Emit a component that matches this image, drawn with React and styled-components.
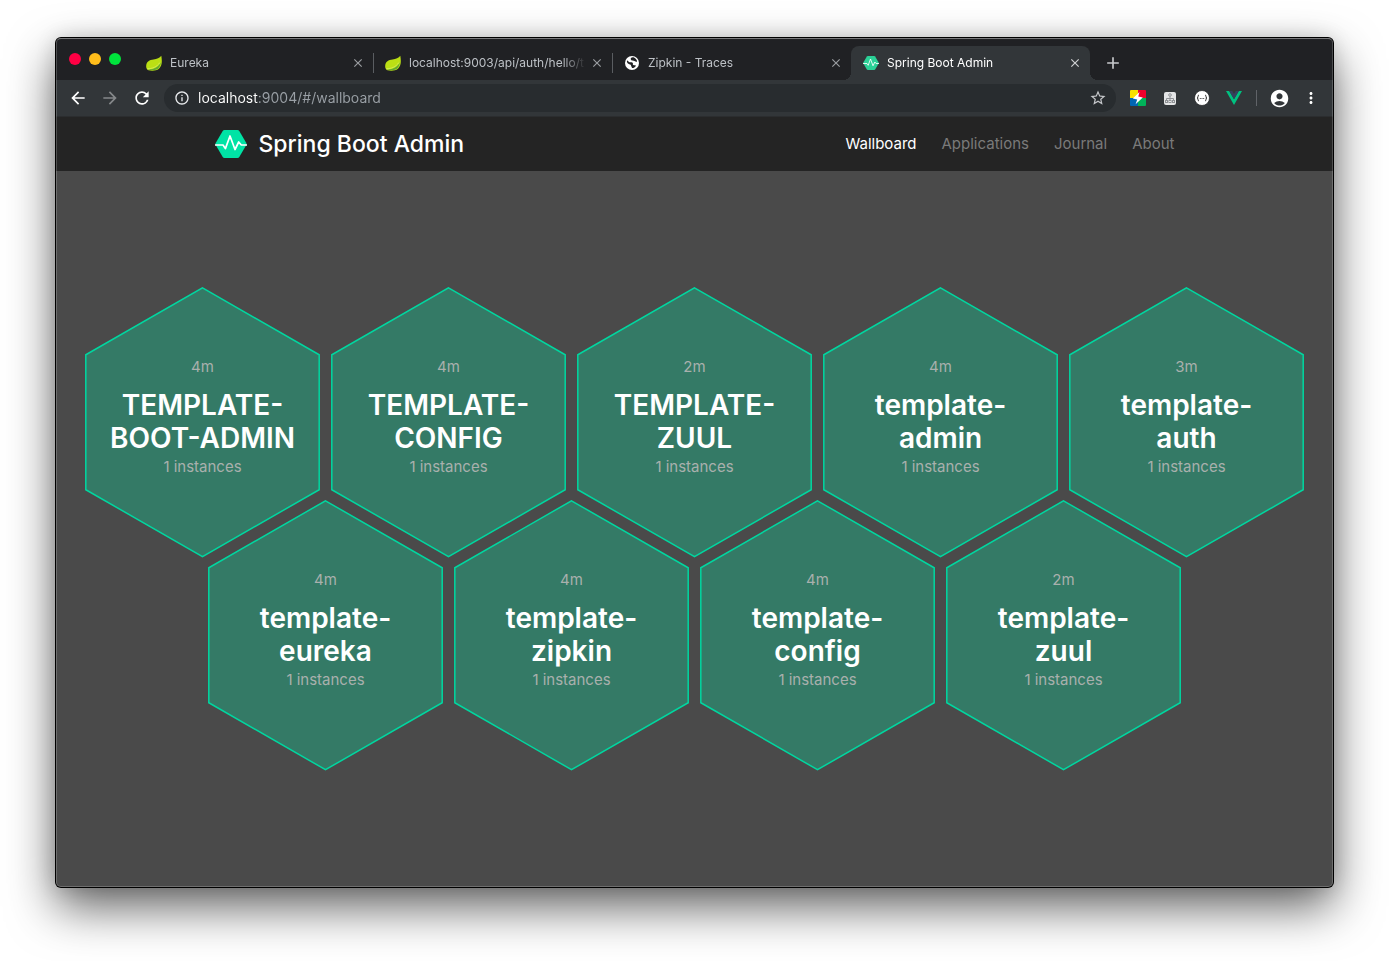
import React from "react";
import styled, { createGlobalStyle } from "styled-components";
import {
  MdAccountCircle,
  MdAdd,
  MdArrowBack,
  MdArrowForward,
  MdClose,
  MdInfoOutline,
  MdMoreVert,
  MdRefresh,
  MdStarBorder,
} from "react-icons/md";

const GlobalStyle = createGlobalStyle`
  *, *::before, *::after { box-sizing: border-box; }
  body {
    margin: 0;
    background: #fff;
    font-family: Inter, "Liberation Sans", sans-serif;
  }
  button { border: 0; padding: 0; background: none; font: inherit; color: inherit; }
  svg { display: block; flex: none; }
`;

const Desktop = styled.div`
  display: flex;
  min-height: 100vh;
  padding: 38px 56px 74px;
  overflow: hidden;
`;

const Window = styled.div`
  position: relative;
  flex: 1;
  min-width: 0;
  display: flex;
  flex-direction: column;
  border-radius: 5px;
  background: #4a4a4a;
  box-shadow: 0 0 0 1px #000, 0 20px 48px rgba(0, 0, 0, 0.62), 0 0 20px rgba(0, 0, 0, 0.15);

  &::after {
    content: "";
    position: absolute;
    inset: 0;
    border-radius: 5px;
    border: 1px solid rgba(255, 255, 255, 0.2);
    border-top-color: rgba(255, 255, 255, 0.4);
    pointer-events: none;
  }
`;

const TabStrip = styled.div`
  display: flex;
  align-items: flex-end;
  height: 42px;
  padding-left: 13px;
  border-radius: 5px 5px 0 0;
  background: #202124;
`;

const Lights = styled.div`
  display: flex;
  align-items: center;
  gap: 8px;
  align-self: stretch;
  width: 65px;
  flex: none;
`;

const Light = styled.button`
  width: 12px;
  height: 12px;
  border-radius: 50%;
  background: ${(p) => p.$color};
`;

const Tab = styled.div`
  position: relative;
  display: flex;
  align-items: center;
  flex: 0 1 239px;
  min-width: 0;
  height: 34px;
  padding: 0 8px 0 12px;
  border-radius: 8px 8px 0 0;
  background: ${(p) => (p.$active ? "#323639" : "transparent")};
  color: ${(p) => (p.$active ? "#fff" : "#bdc1c6")};

  &::before, &::after {
    content: "";
    position: absolute;
    bottom: 0;
    width: 8px;
    height: 8px;
    display: ${(p) => (p.$active ? "block" : "none")};
  }
  &::before { right: 100%; background: radial-gradient(circle at 0 0, transparent 8px, #323639 8px); }
  &::after { left: 100%; background: radial-gradient(circle at 100% 0, transparent 8px, #323639 8px); }
`;

const TabDivider = styled.span`
  position: absolute;
  right: -1px;
  top: 7px;
  width: 1px;
  height: 20px;
  background: #5a5d61;
`;

const TabTitle = styled.button`
  flex: 1;
  min-width: 0;
  margin-left: 8px;
  overflow: hidden;
  white-space: nowrap;
  text-align: left;
  font-size: 12px;
  line-height: 16px;
  mask-image: linear-gradient(90deg, #000 calc(100% - 28px), transparent calc(100% - 4px));
`;

const IconButton = styled.button`
  display: flex;
  align-items: center;
  justify-content: center;
  flex: none;
  width: ${(p) => p.$width || 32}px;
  height: 28px;
  color: ${(p) => p.$color || "#fff"};
`;

const NewTab = styled(IconButton)`
  align-self: flex-end;
  height: 34px;
  margin-left: 7px;
`;

const Toolbar = styled.div`
  display: flex;
  align-items: center;
  height: 36px;
  padding: 0 6px;
  background: #323639;
`;

const AddressBar = styled.label`
  display: flex;
  align-items: center;
  flex: 1;
  min-width: 0;
  height: 28px;
  margin: 0 6px;
  padding: 0 2px 0 10px;
  border-radius: 14px;
  background: #282c2f;
  color: #e8eaed;
`;

const Address = styled.input`
  flex: 1;
  min-width: 0;
  margin-left: 8px;
  padding: 0;
  border: 0;
  outline: 0;
  font: 400 14px/20px Inter, "Liberation Sans", sans-serif;
  color: transparent;
  background: linear-gradient(90deg, #fff 60px, #9aa0a6 60px);
  background-clip: text;
`;

const ToolbarDivider = styled.span`
  width: 1px;
  height: 16px;
  margin: 0 6px;
  background: #606368;
`;

const NavBar = styled.header`
  display: flex;
  justify-content: center;
  height: 55px;
  background: #242424;
  border-top: 1px solid #2b2d2f;
`;

const NavInner = styled.div`
  display: flex;
  align-items: center;
  justify-content: space-between;
  width: 100%;
  max-width: 960px;
`;

const Brand = styled.a`
  display: flex;
  align-items: center;
  gap: 12px;
  color: #fff;
  font-size: 23px;
  font-weight: 500;
  line-height: 32px;
  text-decoration: none;
`;

const NavLinks = styled.nav`
  display: flex;
  gap: 25px;
`;

const NavLink = styled.a`
  color: ${(p) => (p.$active ? "#fff" : "#7a7a7a")};
  font-size: 15px;
  line-height: 24px;
  text-decoration: none;
`;

const Wallboard = styled.main`
  flex: 1;
  display: flex;
  flex-direction: column;
  align-items: center;
  justify-content: center;
  padding: 24px 0;
`;

const HexRow = styled.div`
  display: flex;
  gap: 11px;
  & + & { margin-top: -58px; }
`;

const HexLink = styled.a`
  display: grid;
  width: 235px;
  height: 271px;
  color: #fff;
  text-align: center;
  text-decoration: none;

  > * { grid-area: 1 / 1; }
`;

const HexText = styled.div`
  display: flex;
  flex-direction: column;
  align-items: center;
  padding-top: 70px;
`;

const Meta = styled.span`
  color: #a9b0ad;
  font-size: 15px;
  line-height: 20px;
`;

const Name = styled.h2`
  margin: 12px 0 2px;
  font-size: 28px;
  font-weight: 600;
  line-height: 33px;
`;

function Leaf() {
  return (
    <svg width="16" height="16" viewBox="0 0 16 16">
      <path d="M15.300.8c.9 5 1 10-2.300 12.900-2.600 2.200-7 2.200-10.500 1.600C.8 14.500 0 13 .2 10.800.5 6.800 3.500 5 7.500 4.600c3.500-.4 6-1.500 7.800-3.800Z" fill="#bbdf14" />
      <path d="M1.500 14.300c5.600.6 11-1.800 13.500-7.300-.5 4.300-2.500 6.700-4.500 7.600-2.700 1.100-6.300 1-9-.3Z" fill="#5fa832" />
      <path d="M1.300 13.700c5 .1 9.600-1.700 12.600-6.200" fill="none" stroke="#d9ee60" strokeWidth=".8" />
    </svg>
  );
}

function Globe() {
  return (
    <svg width="16" height="16" viewBox="0 0 16 16">
      <circle cx="8" cy="8" r="7" fill="#fff" />
      <path d="M3 5.500c1.200.2 1.400 1.500 2.800 1.700 1.300.2 2.400-.2 3 .8.500 1-.4 1.600.5 2.100.9.400 2-.1 2.600.7-.7 1.500-2.400 2.400-4 2.300.2-1.300-.8-1.600-.9-2.600-.1-1.300-1.500-1-2.600-1.700C3.300 8.100 2.700 7 3 5.500Z" fill="#202124" />
      <path d="M7 3c.7-.7 2-1 3-.4 1.700.8 2.900 2.200 3.100 4-1 .6-1.700-.2-2.600-.6C9.400 5.500 7.900 6 7.200 5 6.700 4.300 6.500 3.500 7 3Z" fill="#202124" />
    </svg>
  );
}

function Pulse({ size, color }) {
  return (
    <svg width={size} height={size} viewBox="0 0 32 32">
      <path d="M9.500 2h13c.8 0 1.400.4 1.800 1l7 12c.3.600.3 1.400 0 2l-7 12c-.4.600-1 1-1.800 1h-13c-.8 0-1.400-.4-1.800-1l-7-12a2 2 0 0 1 0-2l7-12c.4-.6 1-1 1.800-1Z" fill={color} />
      <path d="M0 17H8L10.400 20.600 15 8 20 21.500 23.700 14 26.300 17H32" fill="none" stroke="#fff" strokeWidth="1.700" strokeLinejoin="round" />
    </svg>
  );
}

function Bolt() {
  return (
    <svg width="16" height="16" viewBox="0 0 16 16">
      <path d="M0 1a1 1 0 0 1 1-1h7v8H0Z" fill="#f7e000" />
      <path d="M8 0h7a1 1 0 0 1 1 1v7H8Z" fill="#f0002c" />
      <path d="M0 8h8v8H1a1 1 0 0 1-1-1Z" fill="#0066b3" />
      <path d="M8 8h8v7a1 1 0 0 1-1 1H8Z" fill="#00b259" />
      <path d="M9.500 2 2.800 8.400l4.400 1L5.600 14.300l7.200-6.700-4.500-1.100Z" fill="#fff" />
    </svg>
  );
}

function Sitemap() {
  return (
    <svg width="12" height="13" viewBox="0 0 12 13">
      <rect width="12" height="13" rx="2" fill="#e4e5e6" />
      <g fill="none" stroke="#909396" strokeWidth="1">
        <circle cx="6" cy="3" r="1.300" />
        <path d="M6 4.500v4M2.500 8.500V6.500h7v2" />
        <rect x="1.500" y="8.500" width="2" height="2" />
        <rect x="5" y="8.500" width="2" height="2" />
        <rect x="8.500" y="8.500" width="2" height="2" />
      </g>
    </svg>
  );
}

function Braces() {
  return (
    <svg width="16" height="16" viewBox="0 0 16 16">
      <circle cx="8" cy="8" r="7.500" fill="#fff" stroke="#1d1f21" strokeWidth=".7" />
      <path d="M5 5.300c-1.200 0-1 .5-1 1.300S3.800 8 3 8c.8 0 1 .6 1 1.400s-.2 1.300 1 1.300M11 5.300c1.200 0 1 .5 1 1.300s.2 1.400 1 1.400c-.8 0-1 .6-1 1.400s.2 1.300-1 1.300" fill="none" stroke="#222" />
      <path d="M5.800 8.500h1m.7 0h1m.7 0h1" stroke="#444" />
    </svg>
  );
}

function Vue() {
  return (
    <svg width="16" height="14" viewBox="0 0 16 14">
      <path d="M0 0h3.200L8 8.300 12.800 0H16L8 14Z" fill="#00c180" />
      <path d="M3.200 0h3L8 3.100 9.800 0h3L8 8.300Z" fill="#34405e" />
    </svg>
  );
}

function Hexagon({ uptime, name }) {
  const [first, second] = name;
  return (
    <HexLink href="#/applications">
      <svg width="235" height="271" viewBox="0 0 235 271">
        <path d="M117.500.800 234.200 67.800V202.700L117.500 269.700.800 202.700V67.800Z" fill="#347a66" stroke="#00d7a0" strokeWidth="1.500" />
      </svg>
      <HexText>
        <Meta>{uptime}</Meta>
        <Name>
          {first}
          <br />
          {second}
        </Name>
        <Meta>1 instances</Meta>
      </HexText>
    </HexLink>
  );
}

const tabs = [
  { title: "Eureka", icon: <Leaf />, divider: true },
  { title: "localhost:9003/api/auth/hello/t", icon: <Leaf />, divider: true },
  { title: "Zipkin - Traces", icon: <Globe /> },
  { title: "Spring Boot Admin", icon: <Pulse size={16} color="#2bd197" />, active: true },
];

const rows = [
  [
    { uptime: "4m", name: ["TEMPLATE-", "BOOT-ADMIN"] },
    { uptime: "4m", name: ["TEMPLATE-", "CONFIG"] },
    { uptime: "2m", name: ["TEMPLATE-", "ZUUL"] },
    { uptime: "4m", name: ["template-", "admin"] },
    { uptime: "3m", name: ["template-", "auth"] },
  ],
  [
    { uptime: "4m", name: ["template-", "eureka"] },
    { uptime: "4m", name: ["template-", "zipkin"] },
    { uptime: "4m", name: ["template-", "config"] },
    { uptime: "2m", name: ["template-", "zuul"] },
  ],
];

const links = ["Wallboard", "Applications", "Journal", "About"];

export default function App() {
  return (
    <Desktop>
      <GlobalStyle />
      <Window>
        <TabStrip>
          <Lights>
            <Light $color="#ff0044" aria-label="Close window" />
            <Light $color="#ffbd1b" aria-label="Minimize window" />
            <Light $color="#00e33c" aria-label="Zoom window" />
          </Lights>
          {tabs.map((tab) => (
            <Tab key={tab.title} $active={tab.active}>
              {tab.icon}
              <TabTitle>{tab.title}</TabTitle>
              <IconButton $width={14} $color={tab.active ? "#d0d2d4" : "#9a9da1"} aria-label="Close tab">
                <MdClose size={14} />
              </IconButton>
              {tab.divider && <TabDivider />}
            </Tab>
          ))}
          <NewTab $color="#c6c8cb" aria-label="New tab">
            <MdAdd size={20} />
          </NewTab>
        </TabStrip>
        <Toolbar>
          <IconButton aria-label="Back"><MdArrowBack size={20} /></IconButton>
          <IconButton $color="#85888a" aria-label="Forward"><MdArrowForward size={20} /></IconButton>
          <IconButton aria-label="Reload"><MdRefresh size={20} /></IconButton>
          <AddressBar>
            <MdInfoOutline size={16} />
            <Address aria-label="Address" defaultValue="localhost:9004/#/wallboard" />
            <IconButton $color="#c6c8cb" aria-label="Bookmark"><MdStarBorder size={18} /></IconButton>
          </AddressBar>
          <IconButton aria-label="Colour extension"><Bolt /></IconButton>
          <IconButton aria-label="Sitemap extension"><Sitemap /></IconButton>
          <IconButton aria-label="JSON extension"><Braces /></IconButton>
          <IconButton aria-label="Vue extension"><Vue /></IconButton>
          <ToolbarDivider />
          <IconButton aria-label="Profile"><MdAccountCircle size={21} /></IconButton>
          <IconButton aria-label="Menu"><MdMoreVert size={18} /></IconButton>
        </Toolbar>
        <NavBar>
          <NavInner>
            <Brand href="#/">
              <Pulse size={32} color="#00e3a5" />
              Spring Boot Admin
            </Brand>
            <NavLinks>
              {links.map((label, i) => (
                <NavLink key={label} href={`#/${label.toLowerCase()}`} $active={i === 0}>
                  {label}
                </NavLink>
              ))}
            </NavLinks>
          </NavInner>
        </NavBar>
        <Wallboard>
          {rows.map((row, i) => (
            <HexRow key={i}>
              {row.map((app) => (
                <Hexagon key={app.name.join("")} {...app} />
              ))}
            </HexRow>
          ))}
        </Wallboard>
      </Window>
    </Desktop>
  );
}
